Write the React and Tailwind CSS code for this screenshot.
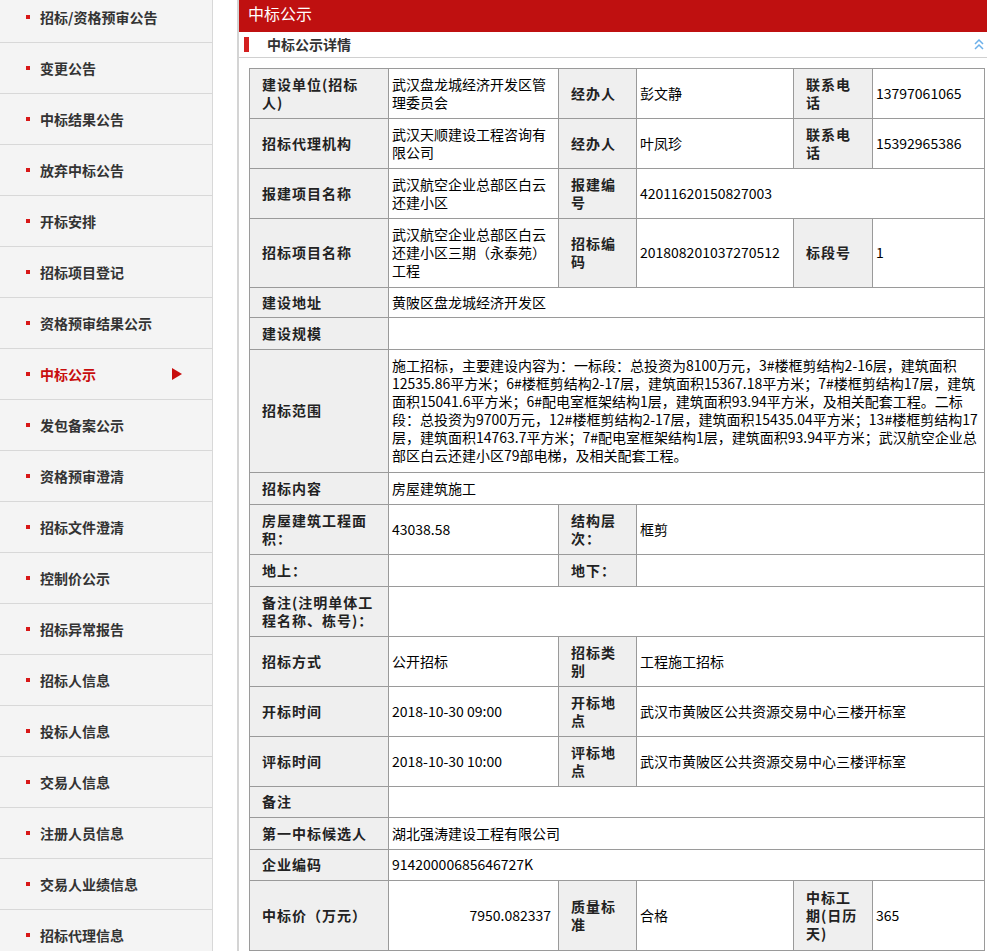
// 中标公示详情页：左侧栏目导航 + 右侧详情表格
import React from "react";

const menu = [
  "招标/资格预审公告",
  "变更公告",
  "中标结果公告",
  "放弃中标公告",
  "开标安排",
  "招标项目登记",
  "资格预审结果公示",
  "中标公示",
  "发包备案公示",
  "资格预审澄清",
  "招标文件澄清",
  "控制价公示",
  "招标异常报告",
  "招标人信息",
  "投标人信息",
  "交易人信息",
  "注册人员信息",
  "交易人业绩信息",
  "招标代理信息",
];

const ACTIVE = "中标公示";

function Sidebar() {
  return (
    <div className="w-[213px] shrink-0 bg-[#f4f4f4] border-r border-[#d8d8d8]">
      <ul className="-mt-[8px]">
        {menu.map((item) => (
          <li
            key={item}
            className="h-[51px] border-b border-[#d8d8d8] flex items-center pl-[26px]"
          >
            <span className="w-[4px] h-[4px] bg-[#d81818] mr-[10px]" />
            <span
              className={
                "text-[14px] font-bold " +
                (item === ACTIVE ? "text-[#c80d0d]" : "text-[#333]")
              }
            >
              {item}
            </span>
            {item === ACTIVE && (
              <svg className="ml-auto mr-[30px]" width="10" height="12" viewBox="0 0 10 12">
                <path d="M0 0 L10 6 L0 12 Z" fill="#c80d0d" />
              </svg>
            )}
          </li>
        ))}
      </ul>
    </div>
  );
}

// 表格单元格
const L = ({ children, colSpan }) => (
  <td
    colSpan={colSpan}
    className="border border-[#9a9a9a] bg-[#efefef] pl-3 pr-3 pt-[3px] pb-[5px] align-middle font-bold tracking-[1px] text-[#222]"
  >
    {children}
  </td>
);

const V = ({ children, colSpan, right }) => (
  <td
    colSpan={colSpan}
    className={
      "border border-[#9a9a9a] bg-white pt-[3px] pb-[5px] align-middle text-black " +
      (right ? "text-right pr-[7px] pl-1" : "pl-[3px] pr-1")
    }
  >
    {children}
  </td>
);

function DetailTable() {
  return (
    <table className="table-fixed border-collapse w-[735px] text-[14px] leading-[18px]">
      <colgroup>
        <col className="w-[139px]" />
        <col className="w-[170px]" />
        <col className="w-[78px]" />
        <col className="w-[157px]" />
        <col className="w-[79px]" />
        <col className="w-[112px]" />
      </colgroup>
      <tbody>
        <tr className="h-[50px]">
          <L>建设单位(招标人)</L>
          <V>武汉盘龙城经济开发区管理委员会</V>
          <L>经办人</L>
          <V>彭文静</V>
          <L>联系电话</L>
          <V>13797061065</V>
        </tr>
        <tr className="h-[50px]">
          <L>招标代理机构</L>
          <V>武汉天顺建设工程咨询有限公司</V>
          <L>经办人</L>
          <V>叶凤珍</V>
          <L>联系电话</L>
          <V>15392965386</V>
        </tr>
        <tr className="h-[50px]">
          <L>报建项目名称</L>
          <V>武汉航空企业总部区白云还建小区</V>
          <L>报建编号</L>
          <V colSpan={3}>42011620150827003</V>
        </tr>
        <tr className="h-[69px]">
          <L>招标项目名称</L>
          <V>武汉航空企业总部区白云还建小区三期（永泰苑）工程</V>
          <L>招标编码</L>
          <V>201808201037270512</V>
          <L>标段号</L>
          <V>1</V>
        </tr>
        <tr className="h-[30px]">
          <L>建设地址</L>
          <V colSpan={5}>黄陂区盘龙城经济开发区</V>
        </tr>
        <tr className="h-[32px]">
          <L>建设规模</L>
          <V colSpan={5}></V>
        </tr>
        <tr className="h-[123px]">
          <L>招标范围</L>
          <V colSpan={5}>
            施工招标，主要建设内容为：一标段：总投资为8100万元，3#楼框剪结构2-16层，建筑面积12535.86平方米；6#楼框剪结构2-17层，建筑面积15367.18平方米；7#楼框剪结构17层，建筑面积15041.6平方米；6#配电室框架结构1层，建筑面积93.94平方米，及相关配套工程。二标段：总投资为9700万元，12#楼框剪结构2-17层，建筑面积15435.04平方米；13#楼框剪结构17层，建筑面积14763.7平方米；7#配电室框架结构1层，建筑面积93.94平方米；武汉航空企业总部区白云还建小区79部电梯，及相关配套工程。
          </V>
        </tr>
        <tr className="h-[32px]">
          <L>招标内容</L>
          <V colSpan={5}>房屋建筑施工</V>
        </tr>
        <tr className="h-[50px]">
          <L>房屋建筑工程面积：</L>
          <V>43038.58</V>
          <L>结构层次：</L>
          <V colSpan={3}>框剪</V>
        </tr>
        <tr className="h-[32px]">
          <L>地上：</L>
          <V></V>
          <L>地下：</L>
          <V colSpan={3}></V>
        </tr>
        <tr className="h-[50px]">
          <L>备注(注明单体工程名称、栋号)：</L>
          <V colSpan={5}></V>
        </tr>
        <tr className="h-[50px]">
          <L>招标方式</L>
          <V>公开招标</V>
          <L>招标类别</L>
          <V colSpan={3}>工程施工招标</V>
        </tr>
        <tr className="h-[50px]">
          <L>开标时间</L>
          <V>2018-10-30 09:00</V>
          <L>开标地点</L>
          <V colSpan={3}>武汉市黄陂区公共资源交易中心三楼开标室</V>
        </tr>
        <tr className="h-[50px]">
          <L>评标时间</L>
          <V>2018-10-30 10:00</V>
          <L>评标地点</L>
          <V colSpan={3}>武汉市黄陂区公共资源交易中心三楼评标室</V>
        </tr>
        <tr className="h-[31px]">
          <L>备注</L>
          <V colSpan={5}></V>
        </tr>
        <tr className="h-[32px]">
          <L>第一中标候选人</L>
          <V colSpan={5}>湖北强涛建设工程有限公司</V>
        </tr>
        <tr className="h-[31px]">
          <L>企业编码</L>
          <V colSpan={5}>91420000685646727K</V>
        </tr>
        <tr className="h-[70px]">
          <L>中标价（万元）</L>
          <V right>7950.082337</V>
          <L>质量标准</L>
          <V>合格</V>
          <L>中标工期(日历天)</L>
          <V>365</V>
        </tr>
        <tr className="h-[32px]">
          <L></L>
          <V colSpan={5}></V>
        </tr>
      </tbody>
    </table>
  );
}

export default function App() {
  return (
    <div
      className="flex bg-white min-h-[951px] overflow-hidden"
      style={{ fontFamily: '"Noto Sans CJK SC", "Noto Sans", sans-serif' }}
    >
      <Sidebar />
      <div className="w-[24px] shrink-0" />
      <main className="flex-1 min-w-0 border-l-2 border-[#d4d4d4]">
        <div className="h-[32px] bg-[#bf1010] pl-[9px] text-white text-[16px] leading-[26px]">
          中标公示
        </div>
        <div className="h-[26px] border-b border-[#d0d0d0] flex items-center pl-[5px] pr-[3px]">
          <span className="w-[5px] h-[15px] bg-[#d42020]" />
          <span className="ml-[18px] text-[14px] font-bold text-[#333]">中标公示详情</span>
          <svg className="ml-auto" width="10" height="11" viewBox="0 0 10 11" fill="none">
            <path d="M1 5 L5 1 L9 5" stroke="#6cb0ea" strokeWidth="1.5" />
            <path d="M1 10 L5 6 L9 10" stroke="#6cb0ea" strokeWidth="1.5" />
          </svg>
        </div>
        <div className="pt-[10px] pl-[10px]">
          <DetailTable />
        </div>
      </main>
    </div>
  );
}
